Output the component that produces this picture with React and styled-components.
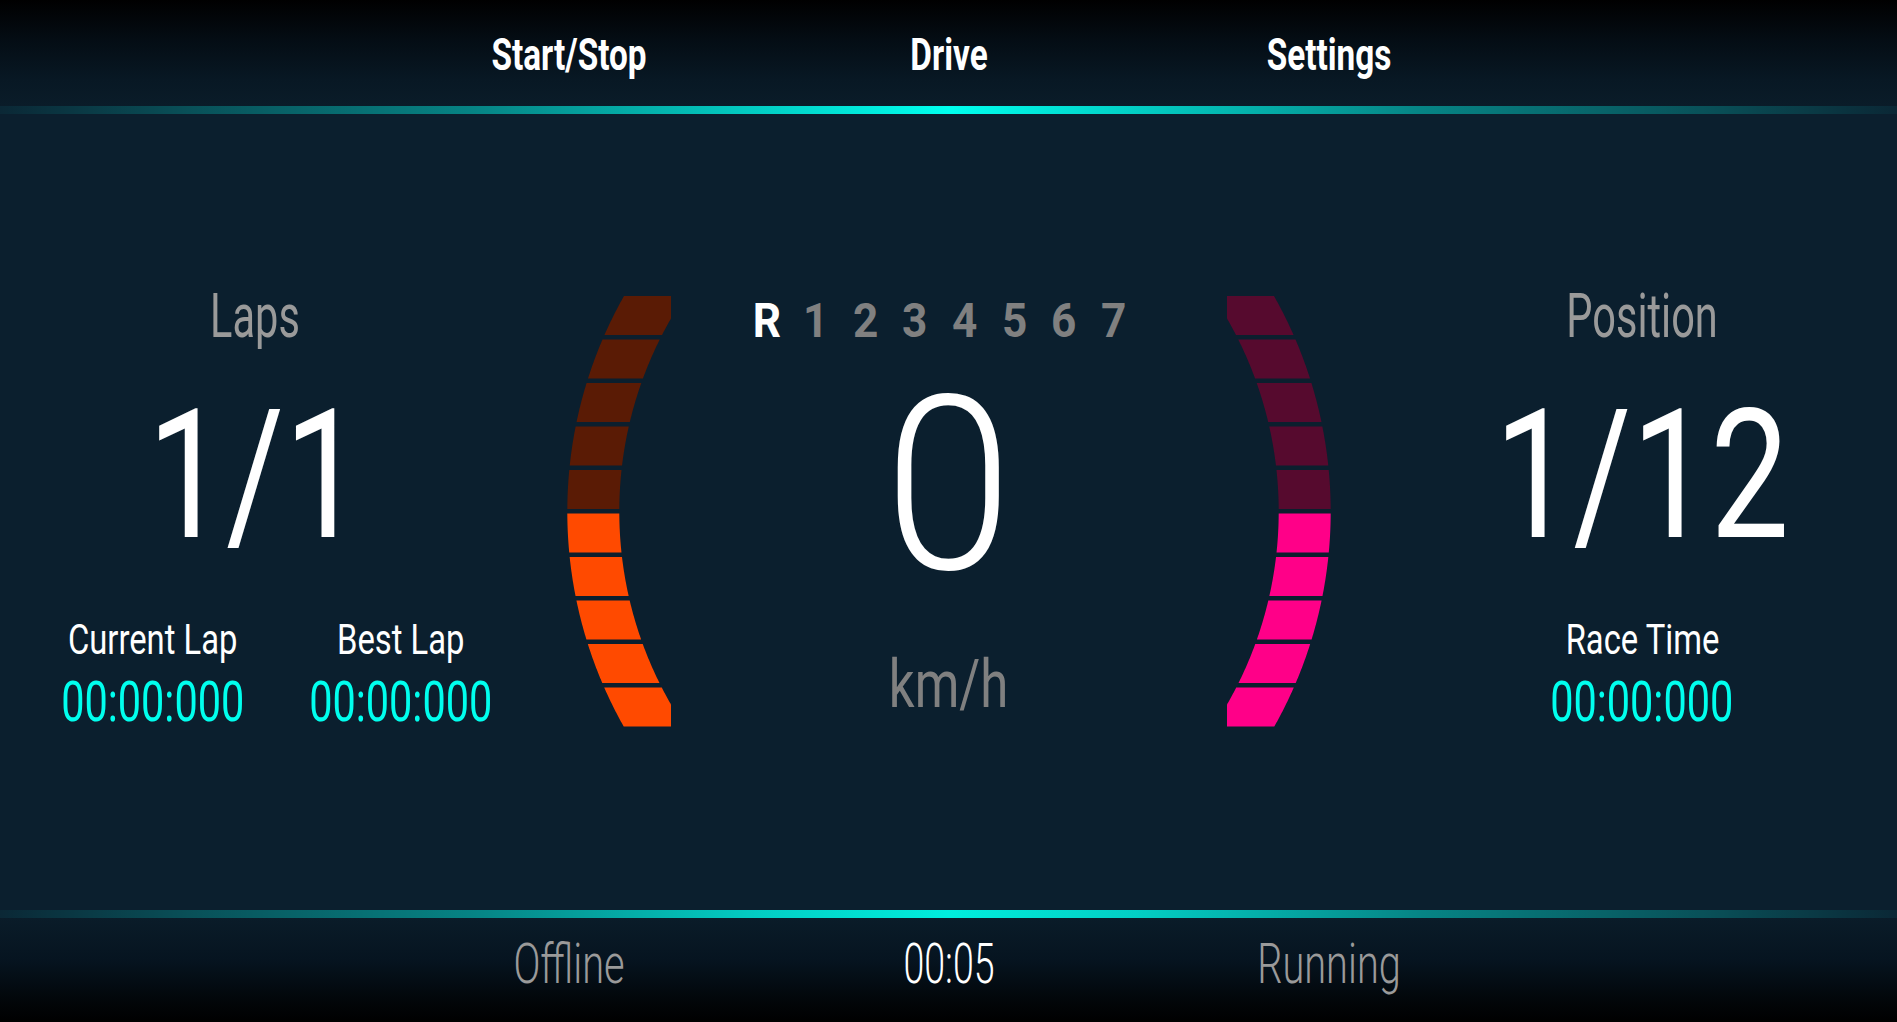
import React from "react";
import styled, { createGlobalStyle } from "styled-components";

const GlobalStyle = createGlobalStyle`
  html, body {
    margin: 0;
    padding: 0;
    background: #0b1f2e;
    overflow: hidden;
  }
  * { box-sizing: border-box; }
`;

const FONT = `Roboto, "Liberation Sans", Arial, sans-serif`;

const Screen = styled.div`
  width: 1897px;
  height: 1022px;
  display: flex;
  flex-direction: column;
  background: #0b1f2e;
  font-family: ${FONT};
  overflow: hidden;
`;

const Header = styled.header`
  height: 106px;
  flex: none;
  padding-top: 32px;
  display: flex;
  justify-content: center;
  align-items: flex-start;
  background: linear-gradient(180deg, #000000 0%, #040c13 35%, #081824 75%, #0a1c29 100%);
`;

const NavItem = styled.div`
  width: 380px;
  text-align: center;
  font: 700 45px/1 ${FONT};
  color: #ffffff;
  transform: scaleX(0.74);
  white-space: nowrap;
`;

const GlowLine = styled.div`
  height: ${(p) => p.$h}px;
  flex: none;
  background: linear-gradient(
    90deg,
    rgba(0, 255, 238, 0.04) 0%,
    rgba(0, 255, 238, 0.22) 10%,
    rgba(0, 255, 238, 0.45) 25%,
    rgba(0, 255, 238, 0.78) 40%,
    ${(p) => p.$c} 50%,
    rgba(0, 255, 238, 0.78) 60%,
    rgba(0, 255, 238, 0.45) 75%,
    rgba(0, 255, 238, 0.22) 90%,
    rgba(0, 255, 238, 0.04) 100%
  );
`;

const Main = styled.main`
  height: 796px;
  flex: none;
  display: flex;
  justify-content: space-between;
  align-items: flex-start;
  padding-top: 171px;
  background: #0b1f2e;
`;

const Panel = styled.section`
  width: 510px;
  flex: none;
  display: flex;
  flex-direction: column;
  align-items: center;
`;

const PanelTitle = styled.div`
  font: 400 62px/1 ${FONT};
  color: #9a9a9a;
  transform: scaleX(0.67);
  white-space: nowrap;
`;

const BigNumber = styled.div`
  margin-top: 39px;
  font: 400 180px/1 ${FONT};
  color: #ffffff;
  transform: scaleX(0.78);
  white-space: nowrap;
`;

const StatRow = styled.div`
  margin-top: 53px;
  align-self: ${(p) => (p.$single ? "center" : "stretch")};
  padding-left: ${(p) => (p.$single ? 0 : 48)}px;
  display: grid;
  grid-template-columns: ${(p) => (p.$single ? "210px" : "210px 210px")};
  column-gap: 38px;
`;

const Stat = styled.div`
  display: flex;
  flex-direction: column;
  align-items: center;
`;

const StatLabel = styled.div`
  font: 400 42px/1 ${FONT};
  color: #ffffff;
  transform: scaleX(0.78);
  white-space: nowrap;
`;

const StatTime = styled.div`
  margin-top: 13px;
  font: 400 56px/1 ${FONT};
  color: #00ffee;
  transform: scaleX(0.74);
  white-space: nowrap;
`;

const Cluster = styled.div`
  width: 764px;
  flex: none;
  display: flex;
  align-items: flex-start;
`;

const GaugeSvg = styled.svg`
  display: block;
  margin-top: 11px;
  flex: none;
`;

const Center = styled.section`
  width: 556px;
  flex: none;
  margin-top: 12px;
  display: flex;
  flex-direction: column;
  align-items: center;
`;

const GearRow = styled.div`
  display: flex;
  padding-right: 17px;
`;

const Gear = styled.span`
  width: 49.6px;
  text-align: center;
  font: 700 48px/1 ${FONT};
  color: ${(p) => (p.$active ? "#ffffff" : "#808080")};
  transform: scaleX(0.92);
`;

const Speed = styled.div`
  margin-top: 20px;
  font: 300 243px/1 ${FONT};
  color: #ffffff;
  transform: scaleX(0.95);
`;

const Unit = styled.div`
  margin-top: 43px;
  font: 400 67px/1 ${FONT};
  color: #808080;
  transform: scaleX(0.76);
`;

const Footer = styled.footer`
  flex: 1;
  padding-top: 18px;
  display: flex;
  justify-content: center;
  align-items: flex-start;
  background: linear-gradient(180deg, #0a1c29 0%, #061420 40%, #020609 80%, #000000 100%);
`;

const StatusItem = styled.div`
  width: 380px;
  text-align: center;
  font: 300 56px/1 ${FONT};
  color: ${(p) => (p.$bright ? "#ffffff" : "#9a9a9a")};
  transform: scaleX(${(p) => (p.$bright ? 0.67 : 0.71)});
  white-space: nowrap;
`;

/* ---------- gauge geometry ---------- */
const GW = 104;
const GH = 431;
const RO = 438;
const RI = 386;
const CX = GW - 0.3 - RO;
const CY = GH / 2;

function segmentPath(top, bot) {
  const N = 40;
  const pts = [];
  for (let i = 0; i <= N; i++) {
    const y = top + ((bot - top) * i) / N;
    pts.push([CX + Math.sqrt(RO * RO - (y - CY) * (y - CY)), y]);
  }
  for (let i = N; i >= 0; i--) {
    const y = top + ((bot - top) * i) / N;
    pts.push([Math.max(0, CX + Math.sqrt(RI * RI - (y - CY) * (y - CY))), y]);
  }
  return "M" + pts.map((p) => p[0].toFixed(2) + "," + p[1].toFixed(2)).join("L") + "Z";
}

const SEGMENTS = Array.from({ length: 10 }, (_, i) => {
  const top = i * 43.5;
  return { d: segmentPath(top, top + 39), lit: i >= 5 };
});

function Gauge({ side, dim, lit }) {
  return (
    <GaugeSvg width={GW} height={GH} viewBox={`0 0 ${GW} ${GH}`}>
      <g transform={side === "left" ? `translate(${GW},0) scale(-1,1)` : undefined}>
        {SEGMENTS.map((s, i) => (
          <path key={i} d={s.d} fill={s.lit ? lit : dim} />
        ))}
      </g>
    </GaugeSvg>
  );
}

const GEARS = ["R", "1", "2", "3", "4", "5", "6", "7"];

export default function App() {
  return (
    <Screen>
      <GlobalStyle />
      <Header>
        <NavItem>Start/Stop</NavItem>
        <NavItem>Drive</NavItem>
        <NavItem>Settings</NavItem>
      </Header>
      <GlowLine $h={8} $c="#00ffee" />
      <Main>
        <Panel>
          <PanelTitle>Laps</PanelTitle>
          <BigNumber>1/1</BigNumber>
          <StatRow>
            <Stat>
              <StatLabel>Current Lap</StatLabel>
              <StatTime>00:00:000</StatTime>
            </Stat>
            <Stat>
              <StatLabel>Best Lap</StatLabel>
              <StatTime>00:00:000</StatTime>
            </Stat>
          </StatRow>
        </Panel>
        <Cluster>
          <Gauge side="left" dim="#5a1b05" lit="#ff4a00" />
          <Center>
            <GearRow>
              {GEARS.map((g) => (
                <Gear key={g} $active={g === "R"}>
                  {g}
                </Gear>
              ))}
            </GearRow>
            <Speed>0</Speed>
            <Unit>km/h</Unit>
          </Center>
          <Gauge side="right" dim="#560a2e" lit="#ff0088" />
        </Cluster>
        <Panel>
          <PanelTitle>Position</PanelTitle>
          <BigNumber>1/12</BigNumber>
          <StatRow $single>
            <Stat>
              <StatLabel>Race Time</StatLabel>
              <StatTime>00:00:000</StatTime>
            </Stat>
          </StatRow>
        </Panel>
      </Main>
      <GlowLine $h={8} $c="#00eedd" />
      <Footer>
        <StatusItem>Offline</StatusItem>
        <StatusItem $bright>00:05</StatusItem>
        <StatusItem>Running</StatusItem>
      </Footer>
    </Screen>
  );
}
